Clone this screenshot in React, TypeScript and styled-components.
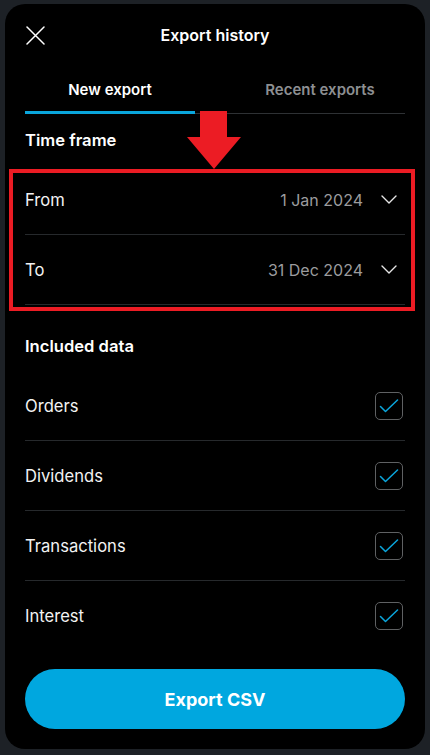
import React from "react";
import styled, { createGlobalStyle } from "styled-components";

const Global = createGlobalStyle`
  html, body { margin: 0; padding: 0; background: #1d2126; }
  body { font-family: Inter, "Noto Sans", "Liberation Sans", sans-serif; -webkit-font-smoothing: antialiased; }
  * { box-sizing: border-box; }
`;

const Page = styled.div`
  width: 430px;
  height: 755px;
  padding: 4px 5px 6px 5px;
  background: #1d2126;
`;

const Modal = styled.div`
  width: 420px;
  height: 745px;
  background: #000;
  border-radius: 20px;
  padding: 0 20px 20px;
  display: flex;
  flex-direction: column;
  color: #fff;
`;

const Header = styled.div`
  height: 62px;
  display: grid;
  grid-template-columns: 40px 1fr 40px;
  align-items: center;
`;

const CloseBtn = styled.button`
  background: none;
  border: none;
  padding: 0;
  width: 20px;
  height: 20px;
  display: flex;
  align-items: center;
  justify-content: center;
  color: #fff;
`;

const Title = styled.h1`
  margin: 0;
  font-size: 16px;
  font-weight: 600;
  text-align: center;
`;

const Tabs = styled.div`
  display: grid;
  grid-template-columns: 170px 1fr;
  border-bottom: 1px solid #2e3134;
  height: 48px;
`;

const Tab = styled.div<{ $active?: boolean }>`
  display: flex;
  align-items: center;
  justify-content: center;
  font-size: 15px;
  font-weight: 600;
  color: ${(p) => (p.$active ? "#fff" : "#8d8f92")};
  border-bottom: 3px solid ${(p) => (p.$active ? "#0aa6dc" : "transparent")};
  margin-bottom: -1px;
  padding-top: 1px;
  padding-left: ${(p) => (p.$active ? "0" : "40px")};
`;

const SectionTitle = styled.h2<{ $top: number }>`
  margin: ${(p) => p.$top}px 0 15px;
  font-size: 16.6px;
  line-height: 20px;
  font-weight: 600;
`;

const List = styled.div`
  position: relative;
  display: flex;
  flex-direction: column;
`;

const Row = styled.div<{ $last?: boolean }>`
  height: 70px;
  display: flex;
  align-items: center;
  justify-content: space-between;
  border-bottom: ${(p) => (p.$last ? "none" : "1px solid #26292c")};
`;

const Label = styled.span`
  font-size: 16.6px;
  color: #f2f2f2;
`;

const ValueWrap = styled.div`
  display: flex;
  align-items: center;
  gap: 18px;
  padding-right: 8px;
`;

const DateText = styled.span`
  font-size: 16px;
  color: #9b9c9e;
`;

const Checkbox = styled.div`
  width: 28px;
  height: 28px;
  border: 1px solid #5f6163;
  border-radius: 5px;
  display: flex;
  align-items: center;
  justify-content: center;
  margin-right: 2px;
`;

const Highlight = styled.div`
  position: absolute;
  left: -16px;
  right: -10px;
  top: 4px;
  bottom: -6px;
  border: 4px solid #ec1c24;
  pointer-events: none;
`;

const Arrow = styled.svg`
  position: absolute;
  left: 162px;
  top: -54px;
  pointer-events: none;
`;

const Spacer = styled.div`
  flex: 1;
`;

const ExportButton = styled.button`
  height: 60px;
  width: 100%;
  border: none;
  border-radius: 30px;
  background: #00a7df;
  color: #fff;
  font-family: inherit;
  font-size: 18px;
  font-weight: 700;
`;

const Chevron = () => (
  <svg width="16" height="9" viewBox="0 0 16 9" fill="none">
    <path d="M1 1l7 7 7-7" stroke="#e6e6e6" strokeWidth="1.4" strokeLinecap="round" strokeLinejoin="round" />
  </svg>
);

const Check = () => (
  <svg width="20" height="14" viewBox="0 0 20 14" fill="none">
    <path d="M1.5 7.5l5 5L18.5 1" stroke="#0aa6dc" strokeWidth="1.5" strokeLinecap="round" strokeLinejoin="round" />
  </svg>
);

export default function App() {
  const dates = [
    { label: "From", value: "1 Jan 2024" },
    { label: "To", value: "31 Dec 2024" },
  ];
  const data = ["Orders", "Dividends", "Transactions", "Interest"];
  return (
    <>
      <Global />
      <Page>
        <Modal>
          <Header>
            <CloseBtn aria-label="Close">
              <svg width="19" height="19" viewBox="0 0 19 19" fill="none">
                <path d="M1 1l17 17M18 1L1 18" stroke="#fff" strokeWidth="1.5" strokeLinecap="round" />
              </svg>
            </CloseBtn>
            <Title>Export history</Title>
            <div />
          </Header>
          <Tabs>
            <Tab $active>New export</Tab>
            <Tab>Recent exports</Tab>
          </Tabs>
          <SectionTitle $top={16}>Time frame</SectionTitle>
          <List>
            {dates.map((d) => (
              <Row key={d.label}>
                <Label>{d.label}</Label>
                <ValueWrap>
                  <DateText>{d.value}</DateText>
                  <Chevron />
                </ValueWrap>
              </Row>
            ))}
            <Highlight />
            <Arrow width="54" height="58" viewBox="0 0 54 58">
              <path d="M13 0h27v26h14L27 58 0 26h13z" fill="#ec1c24" />
            </Arrow>
          </List>
          <SectionTitle $top={31}>Included data</SectionTitle>
          <List>
            {data.map((d, i) => (
              <Row key={d} $last={i === data.length - 1}>
                <Label>{d}</Label>
                <Checkbox>
                  <Check />
                </Checkbox>
              </Row>
            ))}
          </List>
          <Spacer />
          <ExportButton>Export CSV</ExportButton>
        </Modal>
      </Page>
    </>
  );
}
